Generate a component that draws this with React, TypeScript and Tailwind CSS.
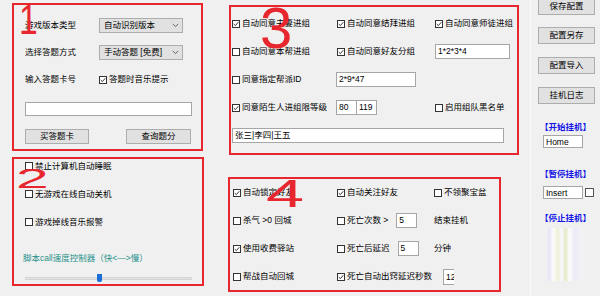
import React from "react";

function Check({ on }: { on?: boolean }) {
  return (
    <span className="inline-flex items-center justify-center shrink-0 size-[8px] border border-[#333] bg-white">
      {on && (
        <svg width="6" height="6" viewBox="0 0 6 6" fill="none">
          <path d="M0.8 3.1 L2.4 4.6 L5.3 1.2" stroke="#222" strokeWidth="0.9" />
        </svg>
      )}
    </span>
  );
}

function CheckRow({ on, label }: { on?: boolean; label: string }) {
  return (
    <div className="flex items-center gap-[2px] whitespace-nowrap">
      <Check on={on} />
      <span>{label}</span>
    </div>
  );
}

function TextBox({ value, className }: { value?: string; className: string }) {
  return (
    <div className={`border border-[#a6a6a6] bg-white px-[2px] leading-[13px] whitespace-nowrap overflow-hidden ${className}`}>
      {value}
    </div>
  );
}

function Combo({ value }: { value: string }) {
  return (
    <div className="flex items-center justify-between w-[84px] h-[15px] bg-[#e1e1e1] border border-[#adadad] pl-[4px] pr-[3px]">
      <span className="whitespace-nowrap">{value}</span>
      <svg width="7" height="5" viewBox="0 0 7 5" fill="none">
        <path d="M0.8 1 L3.5 3.6 L6.2 1" stroke="#555" strokeWidth="0.9" />
      </svg>
    </div>
  );
}

function Btn({ label, className }: { label: string; className: string }) {
  return (
    <div className={`flex items-center justify-center bg-[#e1e1e1] border border-[#adadad] ${className}`}>
      {label}
    </div>
  );
}

function Mark({ text, className }: { text: string; className: string }) {
  return (
    <span className={`absolute pointer-events-none font-['Liberation_Sans',sans-serif] leading-none text-[#e8262d] origin-left ${className}`}>
      {text}
    </span>
  );
}

function PanelVersion() {
  return (
    <div className="relative w-[191px] h-[148px] border-2 border-[#e8262d] pt-[7px] pl-[11px]">
      <div className="flex items-center h-[27px]">
        <span className="w-[74px]">游戏版本类型</span>
        <Combo value="自动识别版本" />
      </div>
      <div className="flex items-center h-[27px]">
        <span className="w-[74px]">选择答题方式</span>
        <Combo value="手动答题 [免费]" />
      </div>
      <div className="flex items-center h-[27px]">
        <span className="w-[74px]">输入答题卡号</span>
        <CheckRow on label="答题时音乐提示" />
      </div>
      <TextBox className="mt-[9px] w-[167px] h-[14px]" />
      <div className="flex justify-between w-[166px] mt-[13px]">
        <Btn label="买答题卡" className="w-[64px] h-[15px]" />
        <Btn label="查询题分" className="w-[65px] h-[15px]" />
      </div>
      <Mark text="1" className="text-[42px] left-[5px] top-[-6px] scale-x-[0.8]" />
    </div>
  );
}

function PanelSystem() {
  return (
    <div className="relative w-[192px] h-[129px] border-2 border-[#e8262d] pt-[1px] pl-[11px]">
      <div className="flex flex-col gap-[16px]">
        <div className="h-[12px] flex items-center"><CheckRow label="禁止计算机自动睡眠" /></div>
        <div className="h-[12px] flex items-center"><CheckRow label="无游戏在线自动关机" /></div>
        <div className="h-[12px] flex items-center"><CheckRow label="游戏掉线音乐报警" /></div>
      </div>
      <div className="mt-[24px] ml-[-2px] h-[12px] flex items-center text-[#27908c] whitespace-nowrap">
        脚本call速度控制器（快&lt;—&gt;慢）
      </div>
      <div className="relative mt-[9px] w-[167px] h-[10px] flex items-center">
        <div className="w-full h-[3px] bg-[#e2e2e2] border border-[#d4d4d4]" />
        <div className="absolute left-[72px] top-[1px] w-[5px] h-[8px] bg-[#1a6fd6] rounded-b-[2px]" />
      </div>
      <Mark text="2" className="text-[28px] left-[2px] top-[6px] scale-x-[2.1]" />
    </div>
  );
}

function PanelTeam() {
  return (
    <div className="relative ml-[1px] w-[290px] h-[150px] border-2 border-[#e8262d] pt-[9px] pl-[1px]">
      <div className="grid grid-cols-[105px_98px_1fr] gap-y-[13px]">
        <div className="h-[15px] flex items-center"><CheckRow on label="自动同意夫妻进组" /></div>
        <div className="h-[15px] flex items-center"><CheckRow on label="自动同意结拜进组" /></div>
        <div className="h-[15px] flex items-center"><CheckRow on label="自动同意师徒进组" /></div>

        <div className="h-[15px] flex items-center"><CheckRow label="自动同意本帮进组" /></div>
        <div className="h-[15px] flex items-center"><CheckRow on label="自动同意好友分组" /></div>
        <TextBox value="1*2*3*4" className="w-[75px] h-[15px]" />

        <div className="h-[15px] flex items-center"><CheckRow label="同意指定帮派ID" /></div>
        <TextBox value="2*9*47" className="ml-[-1px] w-[80px] h-[15px]" />
        <div />

        <div className="h-[15px] flex items-center"><CheckRow on label="同意陌生人进组限等级" /></div>
        <div className="flex ml-[-1px]">
          <TextBox value="80" className="w-[21px] h-[15px]" />
          <TextBox value="119" className="ml-[-1px] w-[21px] h-[15px]" />
        </div>
        <div className="h-[15px] flex items-center"><CheckRow label="启用组队黑名单" /></div>
      </div>
      <TextBox value="张三|李四|王五" className="mt-[13px] w-[272px] h-[15px]" />
      <Mark text="3" className="text-[58px] left-[29px] top-[-8px]" />
    </div>
  );
}

function PanelHang() {
  return (
    <div className="relative w-[273px] h-[115px] border-2 border-[#e8262d] pt-[6px] pl-[3px]">
      <div className="grid grid-cols-[104px_97px_1fr] gap-y-[13px]">
        <div className="h-[15px] flex items-center"><CheckRow on label="自动锁定好友" /></div>
        <div className="h-[15px] flex items-center"><CheckRow on label="自动关注好友" /></div>
        <div className="h-[15px] flex items-center"><CheckRow label="不领聚宝盆" /></div>

        <div className="h-[15px] flex items-center"><CheckRow label="杀气 >0 回城" /></div>
        <div className="h-[15px] flex items-center">
          <CheckRow label="死亡次数 >" />
          <TextBox value="5" className="ml-[8px] w-[21px] h-[15px]" />
        </div>
        <div className="h-[15px] flex items-center">结束挂机</div>

        <div className="h-[15px] flex items-center"><CheckRow on label="使用收费驿站" /></div>
        <div className="h-[15px] flex items-center">
          <CheckRow label="死亡后延迟" />
          <TextBox value="5" className="ml-[8px] w-[21px] h-[15px]" />
        </div>
        <div className="h-[15px] flex items-center">分钟</div>

        <div className="h-[15px] flex items-center"><CheckRow label="帮战自动回城" /></div>
        <div className="h-[15px] flex items-center col-span-2">
          <CheckRow on label="死亡自动出窍延迟秒数" />
          <div className="ml-[11px] w-[11px] h-[16px] border-l border-t border-b border-[#a6a6a6] bg-white pl-[2px] leading-[14px] overflow-hidden whitespace-nowrap">
            12
          </div>
        </div>
      </div>
      <Mark text="4" className="text-[38px] left-[36px] top-[-4px] scale-x-[1.8]" />
    </div>
  );
}

function SideBar() {
  return (
    <div className="w-[70px] h-full border-l border-[#fafafa] pl-[7px] flex flex-col">
      <Btn label="保存配置" className="mt-[-2px] w-[57px] h-[17px]" />
      <Btn label="配置另存" className="mt-[12px] w-[57px] h-[17px]" />
      <Btn label="配置导入" className="mt-[13px] w-[57px] h-[17px]" />
      <Btn label="挂机日志" className="mt-[13px] w-[57px] h-[17px]" />
      <div className="mt-[17px] ml-[2px] h-[12px] flex items-center font-bold text-[#1414e6] whitespace-nowrap">【开始挂机】</div>
      <TextBox value="Home" className="mt-[2px] ml-[5px] w-[40px] h-[13px] leading-[11px]" />
      <div className="mt-[20px] ml-[2px] h-[12px] flex items-center font-bold text-[#1414e6] whitespace-nowrap">【暂停挂机】</div>
      <div className="mt-[6px] ml-[5px] flex items-center gap-[2px]">
        <TextBox value="Insert" className="w-[40px] h-[13px] leading-[11px]" />
        <span className="size-[9px] border border-[#555] bg-white" />
      </div>
      <div className="mt-[13px] ml-[2px] h-[12px] flex items-center font-bold text-[#1414e6] whitespace-nowrap">【停止挂机】</div>
      <div className="mt-[4px] ml-[7px] w-[38px] h-[53px] bg-[linear-gradient(to_right,#f2f2f2,#e8e6f6_12%,#fbfbfb_22%,#eff0d6_34%,#f7f7ff_44%,#e6e9c6_54%,#fdfdfd_64%,#ebebf8_78%,#f4f4f4)]" />
    </div>
  );
}

export default function App() {
  return (
    <div className="w-[600px] h-[296px] overflow-hidden bg-[#f0f0f0] flex font-['Liberation_Sans','Noto_Sans_CJK_SC',sans-serif] text-[8.5px] text-black">
      <div className="w-[228px] h-full pl-[12px] pt-[3px] flex flex-col">
        <PanelVersion />
        <div className="mt-[6px]">
          <PanelSystem />
        </div>
      </div>
      <div className="w-[302px] h-full pt-[5px] flex flex-col">
        <PanelTeam />
        <div className="mt-[22px]">
          <PanelHang />
        </div>
      </div>
      <SideBar />
    </div>
  );
}
